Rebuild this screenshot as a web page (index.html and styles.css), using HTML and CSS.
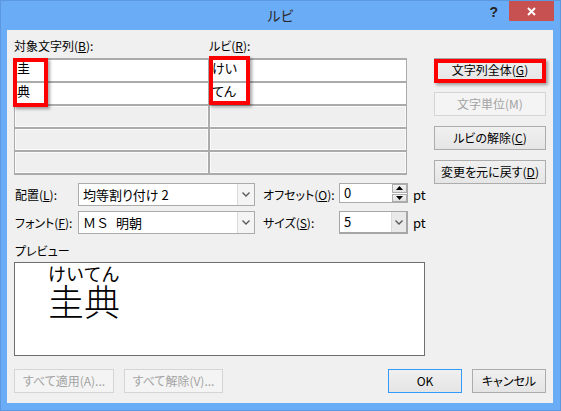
FILE: index.html
```html
<!DOCTYPE html>
<html lang="ja">
<head>
<meta charset="utf-8">
<title>ルビ</title>
<link rel="stylesheet" href="styles.css">
</head>
<body>
<div class="window">
  <div class="titlebar">
    <div class="title">ルビ</div>
    <div class="controls">
      <div class="help">?</div>
      <div class="close">
        <svg width="9" height="9" viewBox="0 0 9 9"><path d="M1 1 L8 8 M8 1 L1 8" stroke="#fff" stroke-width="2" fill="none"/></svg>
      </div>
    </div>
  </div>
  <div class="client">
    <div class="main">
      <div class="left">
        <div class="col-labels">
          <span>対象文字列(<u>B</u>):</span>
          <span>ルビ(<u>R</u>):</span>
        </div>
        <div class="table">
          <div class="cell">圭</div><div class="cell">けい</div>
          <div class="cell">典</div><div class="cell">てん</div>
          <div class="cell empty"></div><div class="cell empty"></div>
          <div class="cell empty"></div><div class="cell empty"></div>
          <div class="cell empty"></div><div class="cell empty"></div>
          <div class="mark mark-base"></div>
          <div class="mark mark-ruby"></div>
        </div>
        <div class="options">
          <span class="lbl first">配置(<u>L</u>):</span>
          <div class="combo">
            <span class="value">均等割り付け 2</span>
            <span class="drop"><svg width="8" height="5" viewBox="0 0 8 5"><path d="M0.5 0.5 L4 4 L7.5 0.5" stroke="#5a5a5a" stroke-width="1.4" fill="none"/></svg></span>
          </div>
          <span class="lbl second">オフセット(<u>O</u>):</span>
          <div class="spin">
            <span class="value">0</span>
            <span class="arrows">
              <span class="arrow"><svg width="7" height="4" viewBox="0 0 7 4"><path d="M0 4 L3.5 0 L7 4 Z" fill="#000"/></svg></span>
              <span class="arrow"><svg width="7" height="4" viewBox="0 0 7 4"><path d="M0 0 L3.5 4 L7 0 Z" fill="#000"/></svg></span>
            </span>
          </div>
          <span class="unit">pt</span>

          <span class="lbl first">フォント(<u>F</u>):</span>
          <div class="combo">
            <span class="value fullwidth">ＭＳ 明朝</span>
            <span class="drop"><svg width="8" height="5" viewBox="0 0 8 5"><path d="M0.5 0.5 L4 4 L7.5 0.5" stroke="#5a5a5a" stroke-width="1.4" fill="none"/></svg></span>
          </div>
          <span class="lbl second">サイズ(<u>S</u>):</span>
          <div class="combo small">
            <span class="value">5</span>
            <span class="drop"><svg width="8" height="5" viewBox="0 0 8 5"><path d="M0.5 0.5 L4 4 L7.5 0.5" stroke="#5a5a5a" stroke-width="1.4" fill="none"/></svg></span>
          </div>
          <span class="unit">pt</span>
        </div>
        <div class="preview-label">プレビュー</div>
        <div class="preview">
          <div class="ruby-block">
            <div class="rt">けいてん</div>
            <div class="rb">圭典</div>
          </div>
        </div>
      </div>
      <div class="side">
        <button class="btn marked">文字列全体(<u>G</u>)</button>
        <button class="btn disabled">文字単位(M)</button>
        <button class="btn">ルビの解除(<u>C</u>)</button>
        <button class="btn">変更を元に戻す(<u>D</u>)</button>
      </div>
    </div>
    <div class="footer">
      <div class="group">
        <button class="btn disabled wide1">すべて適用(A)...</button>
        <button class="btn disabled wide2">すべて解除(V)...</button>
      </div>
      <div class="group">
        <button class="btn default narrow">OK</button>
        <button class="btn narrow">キャンセル</button>
      </div>
    </div>
  </div>
</div>
</body>
</html>
```

FILE: styles.css
```css
* { box-sizing: border-box; }

body {
  margin: 0;
  font-family: "Noto Sans CJK JP", "Noto Sans", sans-serif;
  font-size: 12px;
  color: #000;
  font-feature-settings: "palt";
}

u { text-decoration: underline; text-underline-offset: 1px; }

.window {
  width: 561px;
  height: 411px;
  background: #6BACF6;
  border: 1px solid #5B98E0;
  display: flex;
  flex-direction: column;
}

.titlebar {
  height: 29px;
  display: grid;
  grid-template-columns: 1fr auto 1fr;
}

.title {
  grid-column: 2;
  font-size: 14px;
  line-height: 29px;
  color: #2B2B2B;
}

.controls {
  grid-column: 3;
  display: flex;
  justify-content: flex-end;
  align-items: flex-start;
}

.help {
  font-family: "Liberation Sans", sans-serif;
  font-weight: bold;
  font-size: 14px;
  line-height: 14px;
  margin-top: 4px;
  margin-right: 11px;
  color: #222;
}

.close {
  width: 45px;
  height: 20px;
  background: #C75050;
  margin-right: 6px;
  display: flex;
  align-items: center;
  justify-content: center;
}

.client {
  flex: 1;
  margin: 0 7px 7px 6px;
  background: #F0F0F0;
  padding: 8px 7px 10px;
  display: flex;
  flex-direction: column;
}

.main {
  display: flex;
  gap: 9px;
}

.left {
  width: 411px;
  display: flex;
  flex-direction: column;
}

.col-labels {
  display: grid;
  grid-template-columns: 195px 198px;
  line-height: 16px;
  margin-bottom: 4px;
}

.table {
  position: relative;
  width: 393px;
  display: grid;
  grid-template-columns: 193px 196px;
  grid-auto-rows: 21px;
  gap: 2px;
  padding: 2px 1px;
  background: #ABABAB;
}

.cell {
  background: #fff;
  font-size: 13px;
  line-height: 15px;
  padding-left: 2px;
}

.cell.empty {
  background: #EFEFEF;
  border: 1px solid #FAFAFA;
}

.mark {
  position: absolute;
  border: 4px solid #FF0000;
  box-shadow: 2px 2px 3px rgba(0, 0, 0, 0.35);
}

.mark-base { left: -1px; top: 0; width: 35px; height: 49px; }
.mark-ruby { left: 195px; top: -2px; width: 41px; height: 49px; }

.options {
  margin-top: 8px;
  display: grid;
  grid-template-columns: 64px 177px 84px 69px auto;
  grid-auto-rows: 23px;
  row-gap: 5px;
  align-items: center;
}

.lbl { white-space: nowrap; }
.lbl.first { padding-left: 1px; }
.lbl.second { padding-left: 8px; }
.unit { padding-left: 5px; font-size: 13px; }

.combo {
  height: 23px;
  display: flex;
  background: #fff;
  border: 1px solid #ABABAB;
}

.combo .value,
.spin .value {
  flex: 1;
  padding-left: 4px;
  line-height: 21px;
  font-size: 13px;
  white-space: nowrap;
}

.combo .value.fullwidth {
  font-feature-settings: normal;
  word-spacing: 4px;
}

.drop {
  width: 17px;
  border-left: 1px solid #DADADA;
  background: #F4F4F4;
  display: flex;
  align-items: center;
  justify-content: center;
}

.combo.small { border-color: #A6A6A6; border-width: 1px 2px 2px 1px; }
.combo.small .drop { width: 15px; background: #E9E9E9; }
.combo.small .value { line-height: 20px; }

.spin {
  align-self: start;
  height: 20px;
  display: flex;
  background: #fff;
  border: 1px solid #ABABAB;
}

.spin .value { line-height: 18px; }

.arrows {
  width: 15px;
  display: flex;
  flex-direction: column;
  gap: 1px;
}

.arrow {
  flex: 1;
  display: flex;
  align-items: center;
  justify-content: center;
  background: linear-gradient(#F2F2F2, #E2E2E2);
  border: 1px solid #ACACAC;
}

.preview-label {
  margin-top: 9px;
  line-height: 16px;
  padding-left: 1px;
}

.preview {
  margin-top: 3px;
  height: 94px;
  background: #fff;
  border: 1px solid #6E6E6E;
  padding: 1px 0 0 33px;
}

.ruby-block {
  display: flex;
  flex-direction: column;
  align-items: flex-start;
  font-feature-settings: normal;
}

.rt {
  font-size: 18px;
  line-height: 18px;
}

.rb {
  font-size: 36px;
  line-height: 36px;
  font-weight: 300;
}

.side {
  width: 112px;
  padding-top: 20px;
  display: flex;
  flex-direction: column;
  gap: 10px;
}

.btn {
  height: 24px;
  font-family: "Noto Sans CJK JP", "Noto Sans", sans-serif;
  font-feature-settings: "palt";
  font-size: 12px;
  color: #000;
  border: 1px solid #ACACAC;
  background: linear-gradient(#F0F0F0, #E5E5E5);
  padding: 0;
  line-height: 20px;
  position: relative;
  white-space: nowrap;
}

.btn.disabled {
  color: #A3A3A3;
  border-color: #D5D5D5;
  background: #F4F4F4;
}

.btn.default { border-color: #3399FF; }

.btn.marked::after {
  content: "";
  position: absolute;
  left: -1px;
  right: -1px;
  top: 0;
  bottom: -2px;
  border: 4px solid #FF0000;
  box-shadow: 2px 2px 3px rgba(0, 0, 0, 0.35);
}

.footer {
  margin-top: 13px;
  display: flex;
  justify-content: space-between;
}

.group {
  display: flex;
  gap: 10px;
}

.wide1 { width: 100px; }
.wide2 { width: 99px; }
.narrow { width: 74px; }
```
